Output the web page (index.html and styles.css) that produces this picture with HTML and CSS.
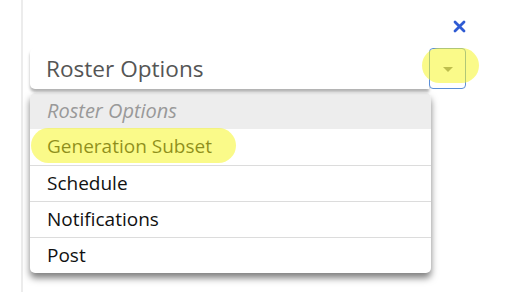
FILE: index.html
```html
<!DOCTYPE html>
<html lang="en">
<head>
    <meta charset="UTF-8">
    <meta name="viewport" content="width=device-width, initial-scale=1.0">
    <title>Roster Options</title>
    <link rel="stylesheet" href="styles.css">
</head>
<body>

<div class="panel">
    <div class="close-row">
        <button class="btnClose" aria-label="Close">
            <svg width="13" height="13" viewBox="0 0 13 13">
                <path d="M2 2 L11 11 M11 2 L2 11" stroke="#2f5bd3" stroke-width="2.8" stroke-linecap="round"/>
            </svg>
        </button>
    </div>

    <div class="select">
        <div class="select-label">Roster Options</div>
        <div class="select-toggle highlight-round">
            <span class="caret"></span>
        </div>
    </div>

    <ul class="menu">
        <li class="menu-header">Roster Options</li>
        <li class="menu-item highlight-pill">Generation Subset</li>
        <li class="menu-item">Schedule</li>
        <li class="menu-item">Notifications</li>
        <li class="menu-item">Post</li>
    </ul>
</div>

</body>
</html>
```

FILE: styles.css
```css
body {
    margin: 0;
    background-color: #fff;
    font-family: "Open Sans", Arial, sans-serif;
    color: #222;
}

.panel {
    margin-left: 21px;
    height: 292px;
    border-left: 2px solid #ececec;
    padding-left: 7px;
    width: 436px;
    box-sizing: content-box;
}

.close-row {
    display: flex;
    justify-content: flex-end;
    align-items: flex-start;
    padding-top: 20px;
    height: 48px;
    box-sizing: border-box;
}

.btnClose {
    border: none;
    background: none;
    padding: 0;
    width: 13px;
    height: 13px;
    display: flex;
}

.select {
    display: flex;
    height: 41px;
}

.select-label {
    flex: 1;
    background-color: #fff;
    border-radius: 5px 0 0 5px;
    box-shadow: 0 3px 3px rgba(0, 0, 0, 0.3);
    font-size: 22.6px;
    color: #555;
    padding-left: 16px;
    line-height: 41px;
}

.select-toggle {
    position: relative;
    width: 37px;
    box-sizing: border-box;
    border: 1px solid #5b8fd8;
    border-radius: 4px;
    background-color: #fff;
    display: flex;
    justify-content: center;
    padding-top: 18px;
}

.caret {
    width: 0;
    height: 0;
    border-left: 5px solid transparent;
    border-right: 5px solid transparent;
    border-top: 5px solid #7a7a7a;
}

/* yellow marker highlights */
.highlight-round::after {
    content: "";
    position: absolute;
    left: -8px;
    top: -1px;
    width: 57px;
    height: 35px;
    border-radius: 18px;
    background-color: rgba(245, 245, 40, 0.55);
}

.menu {
    list-style: none;
    margin: 4px 0 0;
    padding: 0;
    width: 401px;
    border-radius: 5px;
    overflow: hidden;
    background-color: #fff;
    box-shadow: 0 5px 7px rgba(0, 0, 0, 0.5);
}

.menu li {
    height: 36px;
    line-height: 35px;
    padding-left: 17px;
    font-size: 19px;
    box-sizing: border-box;
}

.menu-header {
    background-color: #ededed;
    color: #999;
    font-style: italic;
    font-size: 20px !important;
}

.menu-item {
    border-top: 1px solid #dcdcdc;
    color: #111;
    position: relative;
}

.menu-header + .menu-item {
    border-top: none;
}

.highlight-pill::after {
    content: "";
    position: absolute;
    left: 1px;
    top: -1px;
    width: 205px;
    height: 35px;
    border-radius: 18px;
    background-color: rgba(245, 245, 40, 0.55);
}
```
